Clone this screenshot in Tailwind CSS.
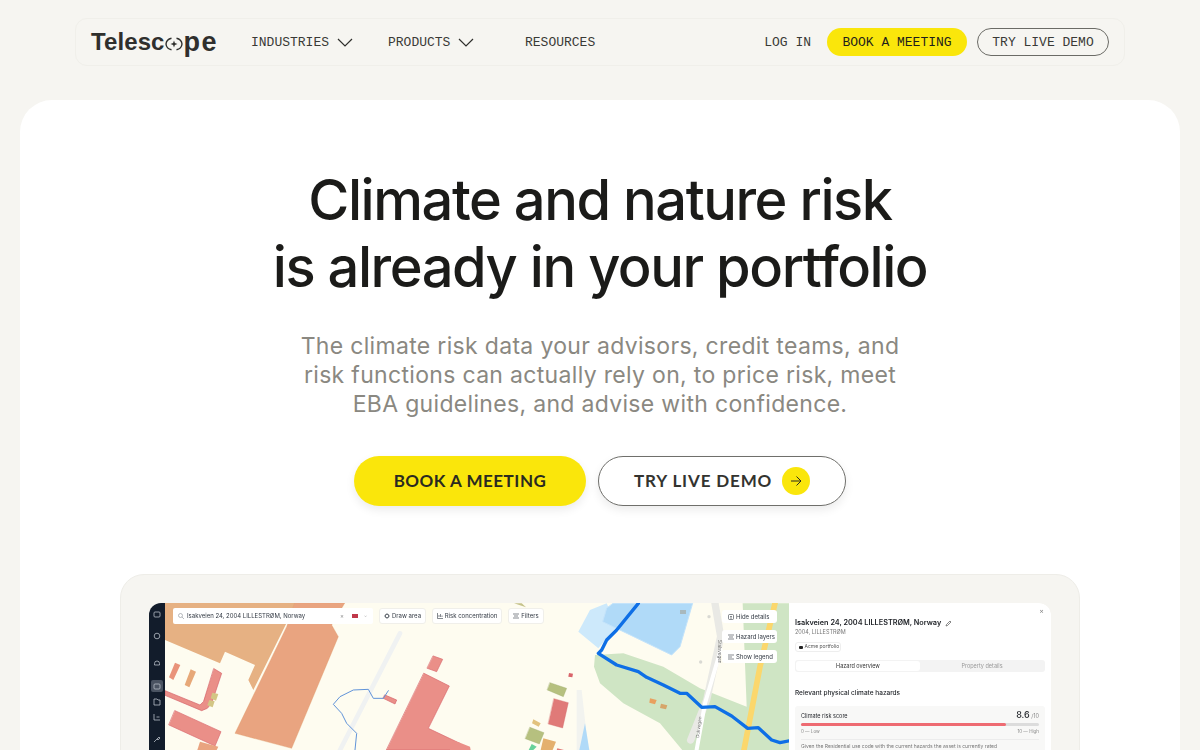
<!DOCTYPE html>
<html lang="en">
<head>
  <meta charset="UTF-8">
  <title>Telescope</title>
  <script src="https://cdn.jsdelivr.net/npm/@tailwindcss/browser@4"></script>
</head>
<body class="bg-[#f6f5f1] h-[750px] overflow-hidden font-['Inter',sans-serif] text-[#1c1c1a]">

  <!-- nav -->
  <div class="px-[75px] pt-[18px]">
    <nav class="h-[48px] rounded-xl border border-[#f0efea] flex items-center pl-[15px] pr-[15px] font-['Liberation_Mono',monospace] text-[13px] text-[#3a3a36]">
      <a class="flex items-center font-['Liberation_Sans',sans-serif] font-bold text-[24px] text-[#2f2f2d] w-[160px] tracking-[0.1px]">
        Telesc
        <svg class="w-[18px] h-[16px] mt-[3px]" viewBox="0 0 18 16" fill="none" stroke="#2f2f2d">
          <path d="M6.500 2.200C3.500 2.800 1.300 5 1 8c.3 3 2.500 5.200 5.500 5.800" stroke-width="1.400"/>
          <path d="M11.500 2.200C14.500 2.800 16.700 5 17 8c-.3 3-2.500 5.200-5.500 5.800" stroke-width="1.400"/>
          <path d="M9 4.500 9.900 7.100 12.500 8 9.900 8.900 9 11.500 8.100 8.900 5.500 8 8.100 7.100Z" fill="#2f2f2d" stroke="none"/>
        </svg>
        <span class="text-[27px] leading-[26px] ml-[1px] tracking-[1.500px]">pe</span>
      </a>
      <a class="flex items-center gap-[8px] w-[137px] pt-[2px]">INDUSTRIES
        <svg class="w-[16px] h-[9px] -mt-[1px]" viewBox="0 0 16 9" fill="none" stroke="#2f2f2c" stroke-width="1.200"><path d="M1 1l7 7 7-7"/></svg>
      </a>
      <a class="flex items-center gap-[8px] w-[137px] pt-[2px]">PRODUCTS
        <svg class="w-[16px] h-[9px] -mt-[1px]" viewBox="0 0 16 9" fill="none" stroke="#2f2f2c" stroke-width="1.200"><path d="M1 1l7 7 7-7"/></svg>
      </a>
      <a class="pt-[2px]">RESOURCES</a>
      <a class="ml-auto pt-[2px]">LOG IN</a>
      <a class="ml-[16px] h-[28px] w-[140px] rounded-full bg-[#fae60b] flex items-center justify-center pt-[2px] text-[#1f1f1c]">BOOK A MEETING</a>
      <a class="ml-[10px] h-[28px] w-[132px] rounded-full border border-[#6b6b66] flex items-center justify-center pt-[2px]">TRY LIVE DEMO</a>
    </nav>
  </div>

  <!-- main card -->
  <main class="mx-[20px] mt-[34px] bg-white rounded-t-[32px] h-[650px] flex flex-col items-center">
    <h1 class="mt-[67px] text-[56px] leading-[67px] font-medium tracking-[-0.026em] text-center text-[#1b1b19]">Climate and nature risk<br>is already in your portfolio</h1>
    <p class="mt-[31px] text-[23px] leading-[29px] tracking-[0.32px] text-center text-[#8a8881] font-normal">The climate risk data your advisors, credit teams, and<br>risk functions can actually rely on, to price risk, meet<br>EBA guidelines, and advise with confidence.</p>
    <div class="mt-[37px] flex gap-[12px] font-['Lato',sans-serif] font-bold text-[17px]">
      <a class="w-[232px] h-[50px] rounded-full bg-[#fae60b] text-[#2a2a20] tracking-[0.03em] flex items-center justify-center shadow-[0_4px_10px_rgba(0,0,0,0.08)]">BOOK A MEETING</a>
      <a class="w-[248px] h-[50px] rounded-full bg-white border border-[#6f6f6b] text-[#33332f] tracking-[0.05em] flex items-center pl-[35px] gap-[10px] shadow-[0_4px_10px_rgba(0,0,0,0.08)]">TRY LIVE DEMO
        <span class="w-[28px] h-[28px] rounded-full bg-[#fae60b] flex items-center justify-center">
          <svg class="w-[12px] h-[12px]" viewBox="0 0 12 12" fill="none" stroke="#2a2a20" stroke-width="1"><path d="M1 6h10M6.500 1.500 11 6l-4.500 4.500"/></svg>
        </span>
      </a>
    </div>

    <!-- product screenshot -->
    <div class="mt-[68px] w-[960px] h-[300px] rounded-[24px] bg-[#f6f5f1] border border-[#eeede8] pl-[28px] pr-[28px] pt-[28px]">
      <div class="flex h-[240px] rounded-t-[12px] overflow-hidden blur-[0.35px] font-['Inter',sans-serif]">

        <!-- app sidebar -->
        <div class="w-[16px] bg-[#121c2b] flex flex-col items-center pt-[8px] shrink-0">
          <svg class="w-[16px] h-[147px]" viewBox="0 0 16 147" fill="none" stroke="#b8bec6" stroke-width="0.800">
            <rect x="5" y="1" width="6" height="5" rx="1"/>
            <circle cx="8" cy="25" r="2.800"/>
            <path d="M8 50a2.500 2.500 0 0 1 2.500 2.500v1.500h-5v-1.500A2.500 2.500 0 0 1 8 50z"/>
            <rect x="2" y="69" width="12" height="12" rx="2" fill="#4a5361" stroke="none"/>
            <rect x="5" y="73" width="6" height="5" rx="1"/>
            <path d="M5 88h3l1 1h2v5H5z"/>
            <path d="M5 103v6h6M7.500 106h3"/>
            <path d="M5 131l3-3M8 128l2-2 1 1-2 2z"/>
          </svg>
        </div>

        <!-- map -->
        <div class="relative w-[624px] h-[147px] bg-[#fefcf0] overflow-hidden">
          <svg class="absolute inset-0 w-[624px] h-[147px]" viewBox="165 603 624 147" stroke-linejoin="round" stroke-linecap="round">
            <!-- left part, coordinates from the first map crop -->
            <g transform="translate(120 570) scale(0.33333)">
              <path d="M135 98H530L400 360 385 330 405 285 315 245 300 280 135 210Z" fill="#e6b183"/>
              <path d="M525 98H675L635 165 655 200 515 535 345 490 500 170Z" fill="#e9a480" stroke="#dd9a68"/>
              <path d="M165 278 181 285 160 330 147 322Z" fill="#e9937a"/>
              <path d="M212 298 228 305 208 352 194 345Z" fill="#e7a878"/>
              <path d="M282 296 305 310 275 400 262 415 245 422 135 376V362L240 405 250 395Z" fill="#ea8f88" stroke="#d4606a" stroke-width="2"/>
              <path d="M277 368 295 372 288 392 272 385ZM268 390 284 394 278 412 262 406Z" fill="#d3c684"/>
              <path d="M165 422 303 485 285 528 147 465Z" fill="#ea8f88" stroke="#d96a70" stroke-width="2"/>
              <path d="M240 515 295 530 290 540H232Z" fill="#e9a480"/>
              <path d="M840 190 660 540" stroke="#f0f2f2" stroke-width="14" fill="none"/>
              <path d="M940 258 968 268 950 305 922 295Z" fill="#ea8f88" stroke="#d96a70" stroke-width="2"/>
              <path d="M912 310 988 348 925 475 1020 520V540H800Z" fill="#ea8f88" stroke="#d96a70" stroke-width="2"/>
              <path d="M795 375 830 390 825 402 790 385Z" fill="#ea8f88" stroke="#d4606a" stroke-width="2"/>
              <path d="M805 362 790 385 760 385 745 358 700 360 660 380 640 403 665 430 680 460 710 490 705 540" fill="none" stroke="#5f93d8" stroke-width="3"/>
            </g>
            <!-- right part, coordinates from the second map crop -->
            <g transform="translate(450 590) scale(0.33333)">
              <path d="M215 40 228 52 192 40Z" fill="#c5c28a"/>
              <path d="M435 195 520 190 640 230 750 295 890 350 878 40H1030V490H705L630 400 520 340 450 280 432 230Z" fill="#cfe5c4"/>
              <path d="M420 60 385 125 445 175 500 110 470 40Z" fill="#cde9fb"/>
              <path d="M490 40H728L690 170 665 195 520 125 458 95 470 55Z" fill="#b0daf8" stroke="#c4e3fa" stroke-width="3"/>
              <path d="M690 60H708V72H690Z" fill="#a8b8bd"/>
              <path d="M795 40 812 140 770 330 722 450" stroke="#e9e9e5" stroke-width="22" fill="none"/>
              <path d="M812 180 765 340 738 490" stroke="#ffffff" stroke-width="12" fill="none"/>
              <path d="M975 40 930 230 880 490" stroke="#fbd76c" stroke-width="17" fill="none"/>
              <circle cx="777" cy="80" r="5" fill="#d9d9d3"/><circle cx="752" cy="216" r="5" fill="#d9d9d3"/>
              <path d="M565 40 500 120 470 150 455 180 445 190 500 225 565 245 590 262 640 285 690 310 710 310 755 352 795 350 845 378 893 415 925 413 965 450 990 458 1020 452" fill="none" stroke="#0e6fe6" stroke-width="10"/>
              <path d="M357 249 369 251 367 262 355 260Z" fill="#d9646a"/>
              <path d="M300 278 350 295 340 320 292 300Z" fill="#b6c07f" stroke="#97a868"/>
              <path d="M312 326 355 338 338 414 295 402Z" fill="#e07a78" stroke="#cf6468"/>
              <path d="M250 388 272 400 266 410 246 400Z" fill="#e2c27d"/>
              <path d="M240 412 282 428 268 462 226 446Z" fill="#b6c07f" stroke="#97a868"/>
              <path d="M280 445 318 455 308 480H272Z" fill="#e4b06e"/>
              <path d="M245 462 260 470 250 480H236Z" fill="#67d19a"/>
              <path d="M322 475 342 480H320Z" fill="#e07a78"/>
              <path d="M0 450 30 458 60 470 62 480H0Z" fill="#ea8f88"/>
              <path d="M600 325 620 330 615 343 598 338Z" fill="#e9a05f"/><path d="M633 341 652 346 648 358 630 354Z" fill="#d6a56a"/>
              <path d="M380 300H395L415 480H380Z" fill="#f2f3ef"/>
              <path d="M405 400 418 480H388Z" fill="#b0daf8"/>
            </g>
            <text x="0" y="0" transform="translate(718 640) rotate(90)" font-family="Inter" font-size="4.500" fill="#777">Stalsvegen</text>
            <text x="0" y="0" transform="translate(699 738) rotate(-83)" font-family="Inter" font-size="4.500" fill="#777">Dukvegen</text>
          </svg>

          <!-- map toolbar -->
          <div class="absolute left-[8px] top-[5px] flex gap-[6px] text-[6px] leading-[16px] text-[#333a44]">
            <div class="w-[200px] h-[16px] bg-white rounded-[2px] flex items-center pl-[5px] pr-[6px] gap-[3px]">
              <svg class="w-[6px] h-[6px]" viewBox="0 0 6 6" fill="none" stroke="#8a8f96" stroke-width="0.600"><circle cx="2.500" cy="2.500" r="2"/><path d="M4 4l2 2"/></svg>
              Isakveien 24, 2004 LILLESTRØM, Norway
              <span class="ml-auto text-[#888]">×</span>
              <span class="ml-[5px] w-[6px] h-[4px] bg-[#c0384a]"></span>
              <span class="ml-[3px] text-[#aaa] text-[4px]">⌄</span>
            </div>
            <div class="w-[47px] h-[16px] bg-white rounded-[3px] flex items-center justify-center gap-[2px] border border-[#f0efea]">
              <svg class="w-[6px] h-[6px]" viewBox="0 0 6 6" fill="none" stroke="#333a44" stroke-width="0.600"><path d="M3 0v2M3 4v2M0 3h2M4 3h2M1.500 1.500h3v3h-3z"/></svg>Draw area</div>
            <div class="w-[70px] h-[16px] bg-white rounded-[3px] flex items-center justify-center gap-[2px] border border-[#f0efea]">
              <svg class="w-[6px] h-[6px]" viewBox="0 0 6 6" fill="none" stroke="#333a44" stroke-width="0.600"><path d="M.5 0v5.500H6M2 4V2M3.500 4V1M5 4V2.500"/></svg>Risk concentration</div>
            <div class="w-[36px] h-[16px] bg-white rounded-[3px] flex items-center justify-center gap-[2px] border border-[#f0efea]">
              <svg class="w-[6px] h-[6px]" viewBox="0 0 6 6" fill="none" stroke="#333a44" stroke-width="0.600"><path d="M0 1h6M1 3h4M0 5h6"/></svg>Filters</div>
          </div>

          <!-- map side buttons -->
          <div class="absolute left-[557px] top-[7px] flex flex-col gap-[7px] text-[6px] text-[#333a44]">
            <div class="w-[55px] h-[13px] bg-white rounded-[3px] flex items-center pl-[6px] gap-[2px]">
              <svg class="w-[6px] h-[6px]" viewBox="0 0 6 6" fill="none" stroke="#333a44" stroke-width="0.600"><rect x="0.500" y="0.500" width="5" height="5" rx="1"/><path d="M2 2.500h2M2 4h2"/></svg>Hide details</div>
            <div class="w-[55px] h-[13px] bg-white rounded-[3px] flex items-center pl-[6px] gap-[2px]">
              <svg class="w-[6px] h-[6px]" viewBox="0 0 6 6" fill="none" stroke="#333a44" stroke-width="0.600"><path d="M0 1h6M1 3h4M0 5h6"/></svg>Hazard layers</div>
            <div class="w-[55px] h-[13px] bg-white rounded-[3px] flex items-center pl-[6px] gap-[2px]">
              <svg class="w-[6px] h-[6px]" viewBox="0 0 6 6" fill="none" stroke="#333a44" stroke-width="0.600"><path d="M0 1h6M0 3h4M0 5h6"/></svg>Show legend</div>
          </div>
        </div>

        <!-- property panel -->
        <div class="relative w-[262px] h-[147px] bg-white rounded-tr-[12px] pl-[6px] pr-[6px] pt-[15px] overflow-hidden text-[#25282d]">
          <span class="absolute right-[7px] top-[3px] text-[7px] text-[#888]">×</span>
          <div class="flex items-center gap-[4px] text-[7.300px] leading-[10px] font-semibold text-[#1c1f24]">Isakveien 24, 2004 LILLESTRØM, Norway
            <svg class="w-[7px] h-[7px]" viewBox="0 0 7 7" fill="none" stroke="#555" stroke-width="0.700"><path d="M1 6l.5-1.500L5 1l1 1-3.500 3.500z"/></svg>
          </div>
          <div class="text-[5.500px] leading-[7px] mt-[1px] text-[#777]">2004, LILLESTRØM</div>
          <div class="mt-[6px] w-[46px] h-[10px] rounded-[3px] border border-[#eeeeee] flex items-center pl-[3px] gap-[1.500px] text-[5px] text-[#555]">
            <span class="w-[4px] h-[3px] bg-[#222] rounded-[1px]"></span>Acme portfolio
          </div>
          <div class="mt-[8px] h-[12px] rounded-[3px] bg-[#f3f3f3] flex p-[1px] text-[5.500px] leading-[10px] text-center">
            <div class="w-[124px] bg-white rounded-[3px] text-[#333]">Hazard overview</div>
            <div class="flex-1 text-[#999]">Property details</div>
          </div>
          <div class="mt-[17px] text-[6.500px] leading-[8px] font-medium">Relevant physical climate hazards</div>
          <div class="mt-[9px] h-[60px] rounded-[3px] bg-[#f8f8f7] px-[6px] pt-[4px]">
            <div class="flex items-end justify-between text-[5.500px] leading-[9px]">Climate risk score
              <span><span class="text-[9px] font-medium">8.6</span> <span class="text-[#888]">/10</span></span>
            </div>
            <div class="mt-[2px] h-[3px] rounded-full bg-[#dcdcdc]">
              <div class="h-[3px] w-[86%] rounded-full bg-[#ee6b72]"></div>
            </div>
            <div class="mt-[3px] flex justify-between text-[4.500px] leading-[6px] text-[#888]"><span>0 — Low</span><span>10 — High</span></div>
            <div class="mt-[4px] border-t border-[#ececec] pt-[3px] text-[5px] leading-[7px] text-[#777]">Given the Residential use code with the current hazards the asset is currently rated</div>
          </div>
        </div>
      </div>
    </div>
  </main>
</body>
</html>
